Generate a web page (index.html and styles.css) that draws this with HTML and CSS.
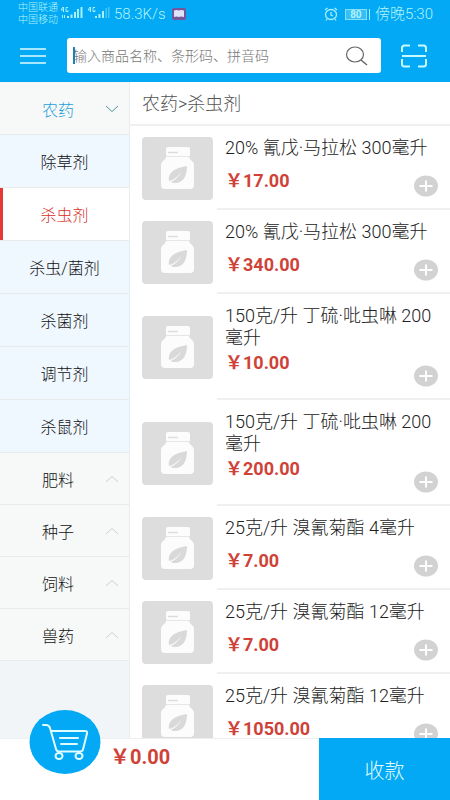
FILE: index.html
```html
<!DOCTYPE html>
<html lang="zh-CN">
<head>
<meta charset="utf-8">
<meta name="viewport" content="width=device-width, initial-scale=1">
<title>商品</title>
<link rel="stylesheet" href="styles.css">
</head>
<body>
<svg class="defs" width="0" height="0" aria-hidden="true">
  <symbol id="bottle" viewBox="0 0 71 63">
    <rect x="24" y="10" width="24" height="10" rx="2" fill="#fcfcfc"/>
    <path d="M26 15.500h10" stroke="#ddd" stroke-width="1.500"/>
    <path d="M24 20h23q0 2 3 4 2 1.500 2 4v20q0 4-4 4H23q-4 0-4-4V28q0-2.500 2-4 3-2 3-4z" fill="#fcfcfc"/>
    <path d="M24 19.500h23" stroke="#e6e6e6"/>
    <path d="M45 29c0 9-3 17-12 17-2 0-3.500-.5-4.500-1 5-2 9-6 11-10-4 5-8 8-12.500 9-1.500-8 5-13 18-15z" fill="#d9d9d9"/>
  </symbol>
  <symbol id="plus" viewBox="0 0 24 22">
    <ellipse cx="12" cy="11" rx="12" ry="10.500" fill="#d2d2d2"/>
    <path d="M5.500 11h13M12 5.500v11" stroke="#fff" stroke-width="2"/>
  </symbol>
  <symbol id="up" viewBox="0 0 14 8">
    <path d="M1 7l6-5.500L13 7" fill="none" stroke="#ccd0d0"/>
  </symbol>
</svg>
<div class="app">
  <header class="top">
    <div class="status">
      <div class="carriers"><span>中国联通</span><span>中国移动</span></div>
      <svg class="signals" width="52" height="16" viewBox="0 0 52 16" fill="#a5f0fa">
        <g fill="none" stroke="#a5f0fa"><path d="M3 1L1 4h3M3.500 1v5M8 1.500H6v4h2V4M30 1l-2 3h3M30.500 1v5M35 1.500h-2v4h2V4"/></g>
        <path d="M2 9h1v3H2zM4 9h1v3H4zM7 10h2v2H7zM10.500 8.500h2V12h-2zM14 6h2v6h-2zM17 3h2v9h-2zM20.500 1h2v11h-2zM35 10h2v2h-2zM38.500 8h2v4h-2zM42 5h2v7h-2z"/>
        <path d="M45.500 2h1.500v10h-1.500zM48 1h1.500v11H48z" opacity=".4"/>
      </svg>
      <span class="speed">58.3K/s</span>
      <svg class="book" width="14" height="12" viewBox="0 0 14 12"><rect width="14" height="12" rx="2" fill="#75569b"/><path d="M2 2.500q3-1 5 0 2-1 5 0V9q-3-1-5 0-2-1-5 0z" fill="#dce4fa"/></svg>
      <span class="space"></span>
      <svg width="14" height="14" viewBox="0 0 14 14" fill="none" stroke="#a5f0fa" stroke-width="1.300"><ellipse cx="7" cy="7.500" rx="5.500" ry="5"/><path d="M7 5v3l2 1M1 3l2.500-2M13 3l-2.500-2M3 12l-1 1.500M11 12l1 1.500"/></svg>
      <span class="battery">80</span>
      <span class="clock">傍晚5:30</span>
    </div>
    <div class="toolbar">
      <button class="icon-btn" aria-label="菜单"><svg width="28" height="18" viewBox="0 0 28 18" stroke="#dffcff" stroke-width="1.500"><path d="M1 2h26M1 9h26M1 16h26"/></svg></button>
      <div class="search">
        <input type="text" aria-label="搜索商品" placeholder="输入商品名称、条形码、拼音码">
        <span class="caret"></span>
        <button class="icon-btn" aria-label="搜索"><svg width="24" height="20" viewBox="0 0 24 20" fill="none" stroke="#666" stroke-width="1.200"><ellipse cx="10" cy="8.500" rx="8.500" ry="7.500"/><path d="M16 14l6 5" stroke-width="1.500"/></svg></button>
      </div>
      <button class="icon-btn" aria-label="扫码"><svg width="26" height="24" viewBox="0 0 26 24" fill="none" stroke="#c8fbff" stroke-width="2"><path d="M1 8V4q0-2.500 2.500-2.500H9M17 1.500h5.500Q25 1.500 25 4v4M1 15v5q0 2.500 2.500 2.500H9M17 22.500h5.500Q25 22.500 25 20v-5M1 12h24"/></svg></button>
    </div>
  </header>

  <div class="content">
    <nav class="side">
      <button class="group open">农药<svg class="chev" width="14" height="8" viewBox="0 0 14 8"><path d="M1 1l6 5.500L13 1" fill="none" stroke="#55919f"/></svg></button>
      <a class="sub" href="#">除草剂</a>
      <a class="sub current" href="#">杀虫剂</a>
      <a class="sub" href="#">杀虫/菌剂</a>
      <a class="sub" href="#">杀菌剂</a>
      <a class="sub" href="#">调节剂</a>
      <a class="sub" href="#">杀鼠剂</a>
      <button class="group">肥料<svg class="chev" width="14" height="8"><use href="#up"/></svg></button>
      <button class="group">种子<svg class="chev" width="14" height="8"><use href="#up"/></svg></button>
      <button class="group">饲料<svg class="chev" width="14" height="8"><use href="#up"/></svg></button>
      <button class="group">兽药<svg class="chev" width="14" height="8"><use href="#up"/></svg></button>
    </nav>
    <main class="list">
      <div class="crumb">农药&gt;杀虫剂</div>
      <article class="item"><svg class="thumb"><use href="#bottle"/></svg><div class="info"><h2>20% 氰戊·马拉松 300毫升</h2><p class="price">￥17.00</p><button class="add" aria-label="添加"><svg width="24" height="22"><use href="#plus"/></svg></button></div></article>
      <article class="item"><svg class="thumb"><use href="#bottle"/></svg><div class="info"><h2>20% 氰戊·马拉松 300毫升</h2><p class="price">￥340.00</p><button class="add" aria-label="添加"><svg width="24" height="22"><use href="#plus"/></svg></button></div></article>
      <article class="item tall"><svg class="thumb"><use href="#bottle"/></svg><div class="info"><h2>150克/升 丁硫·吡虫啉 200毫升</h2><p class="price">￥10.00</p><button class="add" aria-label="添加"><svg width="24" height="22"><use href="#plus"/></svg></button></div></article>
      <article class="item tall"><svg class="thumb"><use href="#bottle"/></svg><div class="info"><h2>150克/升 丁硫·吡虫啉 200毫升</h2><p class="price">￥200.00</p><button class="add" aria-label="添加"><svg width="24" height="22"><use href="#plus"/></svg></button></div></article>
      <article class="item"><svg class="thumb"><use href="#bottle"/></svg><div class="info"><h2>25克/升 溴氰菊酯 4毫升</h2><p class="price">￥7.00</p><button class="add" aria-label="添加"><svg width="24" height="22"><use href="#plus"/></svg></button></div></article>
      <article class="item"><svg class="thumb"><use href="#bottle"/></svg><div class="info"><h2>25克/升 溴氰菊酯 12毫升</h2><p class="price">￥7.00</p><button class="add" aria-label="添加"><svg width="24" height="22"><use href="#plus"/></svg></button></div></article>
      <article class="item"><svg class="thumb"><use href="#bottle"/></svg><div class="info"><h2>25克/升 溴氰菊酯 12毫升</h2><p class="price">￥1050.00</p><button class="add" aria-label="添加"><svg width="24" height="22"><use href="#plus"/></svg></button></div></article>
    </main>
  </div>

  <footer class="bottom">
    <button class="cart" aria-label="购物车"><svg width="72" height="64" viewBox="0 0 72 64" fill="none" stroke="#dffcff" stroke-width="2" stroke-linecap="round" stroke-linejoin="round"><ellipse cx="36" cy="32" rx="35.500" ry="32" fill="#03a9f4" stroke="none"/><path d="M14 15h3q3 0 4 3l6 21q.7 2.500 3 2.500h21q2.500 0 3-2l4-16q.7-2.500-2-2.500H22M31 28h18M32 34h16"/><ellipse cx="30" cy="46" rx="3.500" ry="3" fill="#03a9f4"/><ellipse cx="50" cy="46" rx="3.500" ry="3" fill="#03a9f4"/></svg></button>
    <span class="total">￥0.00</span>
    <button class="pay">收款</button>
  </footer>
</div>
</body>
</html>
```

FILE: styles.css
```css
* { box-sizing: border-box; }
body {
  margin: 0;
  font-family: Roboto, "Noto Sans CJK SC", sans-serif;
  font-weight: 300;
  color: #222;
  background: #fff;
}
button, input { font: inherit; border: 0; padding: 0; background: none; }
h2, p { margin: 0; }
svg { display: block; flex: none; }
.defs { position: absolute; }
.app { display: flex; flex-direction: column; height: 100vh; }

.top { background: #03a9f4; flex: none; }
.status {
  display: flex;
  align-items: center;
  height: 28px;
  padding: 0 17px 0 18px;
  color: #b0f3fb;
}
.carriers { display: flex; flex-direction: column; font-size: 10px; line-height: 12px; }
.signals { margin-left: 2px; }
.speed { font-size: 15px; margin-left: 2px; }
.book { margin-left: 6px; }
.space { flex: 1; }
.battery {
  width: 22px;
  margin: 0 8px 0 7px;
  border: 1px solid #80e0fa;
  box-shadow: 2px 0 0 #03a9f4, 3px 0 0 #a5f0fa;
  background: #39bdf6;
  font-size: 10px;
  line-height: 9px;
  font-weight: 700;
  text-align: center;
}
.clock { font-size: 15px; line-height: 20px; }

.toolbar {
  display: flex;
  align-items: center;
  gap: 20px;
  padding: 10px 23px 9px 19px;
}
.icon-btn { flex: none; }
.search {
  position: relative;
  display: flex;
  align-items: center;
  flex: 1;
  min-width: 0;
  height: 35px;
  padding: 0 12px 0 6px;
  border-radius: 3px;
  background: #fff;
}
.search input { flex: 1; min-width: 0; height: 100%; font-size: 14px; outline: 0; }
.search input::placeholder { color: #777; opacity: 1; }
.caret { position: absolute; left: 6px; top: 9px; width: 2px; height: 17px; background: #1b7fb8; }

.content { display: flex; flex: 1; min-height: 0; overflow: hidden; }
.side {
  display: flex;
  flex-direction: column;
  flex: none;
  width: 130px;
  padding-top: 1px;
  border-right: 1px solid #e8edf1;
  background: #f1f5f8;
  font-size: 16px;
}
.group, .sub {
  display: flex;
  align-items: center;
  justify-content: center;
  flex: none;
  border-bottom: 1px solid #e8ebec;
  color: #111;
  text-decoration: none;
}
.group { position: relative; height: 52px; padding-right: 13px; background: #f6f9f8; }
.group.open { color: #1e9fdb; }
.sub { height: 53px; background: #eff7ff; }
.sub.current { background: #fff; color: #d8302a; box-shadow: inset 3px 0 0 #e53935; }
.chev { position: absolute; right: 10px; top: 22px; }

.list { flex: 1; min-width: 0; overflow: hidden; }
.crumb {
  height: 44px;
  padding-left: 12px;
  border-bottom: 2px solid #f0f0f0;
  font-size: 18px;
  line-height: 43px;
  color: #555;
}
.item { display: flex; align-items: center; gap: 4px; min-height: 84px; padding-left: 12px; }
.thumb { width: 71px; height: 63px; border-radius: 4px; background: #ddd; }
.info {
  position: relative;
  flex: 1;
  min-width: 0;
  align-self: stretch;
  padding: 11px 12px 0 8px;
  border-bottom: 2px solid #f0f0f0;
}
.tall { min-height: 106px; }
.info h2 { min-height: 30px; font-size: 18px; line-height: 22px; font-weight: 300; color: #222; }
.price { margin-top: 2px; font-size: 18px; line-height: 24px; font-weight: 700; color: #cf4238; }
.add { position: absolute; right: 12px; bottom: 11px; }

.bottom {
  position: relative;
  display: flex;
  flex: none;
  height: 62px;
  padding-left: 110px;
  background: #fff;
  border-top: 1px solid #eee;
}
.cart { position: absolute; left: 29px; top: -29px; }
.total { flex: 1; font-size: 20px; line-height: 36px; font-weight: 700; color: #cf4238; }
.pay { width: 131px; margin-top: -1px; background: #03a9f4; color: #e0fbff; font-size: 20px; }
```
